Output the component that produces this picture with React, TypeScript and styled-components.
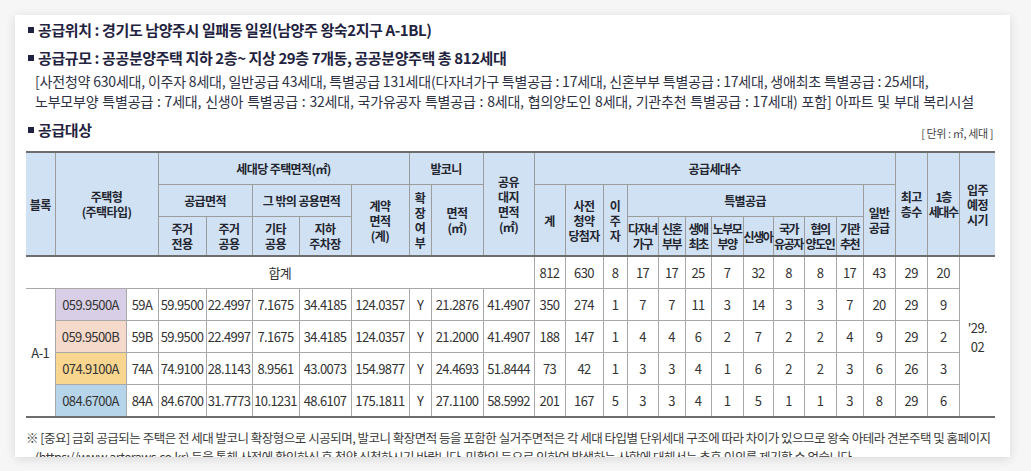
import styled, { createGlobalStyle } from "styled-components";

const GlobalStyle = createGlobalStyle`
  html, body {
    margin: 0;
    padding: 0;
    background: #f6f6f6;
  }
  body {
    font-family: "Noto Sans CJK KR", "Noto Sans", sans-serif;
    color: #2a2d3e;
  }
`;

const Page = styled.div`
  padding: 15px 21px 0 15px;
  height: 471px;
  box-sizing: border-box;
`;

const Card = styled.div`
  background: #fff;
  height: 442px;
  overflow: hidden;
  box-shadow: 0 2px 10px rgba(0, 0, 0, 0.12);
  padding: 4px 15px 0 11px;
  box-sizing: border-box;
`;

const Title = styled.div<{ $gap?: number }>`
  display: flex;
  align-items: center;
  gap: 4px;
  font-size: 15px;
  font-weight: 700;
  letter-spacing: -0.4px;
  line-height: 22px;
  color: #1f2340;
  padding-left: 2px;
  margin-top: ${(p) => p.$gap ?? 0}px;
`;

const Bullet = styled.span`
  display: inline-block;
  width: 6px;
  height: 6px;
  background: #1f2340;
`;

const Detail = styled.p`
  margin: 2px 0 4px 9px;
  font-size: 14px;
  line-height: 20px;
  letter-spacing: -0.2px;
  color: #2f3245;
  white-space: nowrap;
`;

const DetailLine = styled.span<{ $spread?: number }>`
  display: block;
  word-spacing: ${(p) => p.$spread ?? 0}px;
`;

const HeadingRow = styled.div`
  display: flex;
  justify-content: space-between;
  align-items: flex-end;
  margin-top: 8px;
`;

const Unit = styled.span`
  font-size: 11px;
  letter-spacing: -0.4px;
  color: #444;
  line-height: 14px;
  padding-right: 2px;
  margin-bottom: 1px;
`;

const Table = styled.table`
  width: 969px;
  margin-top: 10px;
  border-collapse: collapse;
  table-layout: fixed;
  border-top: 2px solid #6d6d6d;
  border-bottom: 2px solid #6d6d6d;
`;

const Col = styled.col<{ $w: number }>`
  width: ${(p) => p.$w}px;
`;

const Th = styled.th<{ $h?: number; $tight?: boolean }>`
  background: #cfe1f3;
  border: 1px solid #9c9c9c;
  border-top: none;
  font-size: 12px;
  font-weight: 700;
  line-height: 15px;
  letter-spacing: ${(p) => (p.$tight ? "-1.4px" : "-0.6px")};
  color: #23252f;
  padding: 0;
  height: ${(p) => p.$h ?? 31}px;
  text-align: center;
  vertical-align: middle;
  white-space: nowrap;

  &:first-child {
    border-left: none;
  }
  &:last-child {
    border-right: none;
  }
`;

const HeadRow = styled.tr`
  border-bottom: 2px solid #6d6d6d;
`;

const Td = styled.td<{ $bg?: string }>`
  background: ${(p) => p.$bg ?? "transparent"};
  border: 1px solid #a8a8a8;
  font-size: 13px;
  letter-spacing: -0.6px;
  color: #333;
  height: 31px;
  padding: 0;
  text-align: center;
  vertical-align: middle;
  white-space: nowrap;
  overflow: hidden;

  &:first-child {
    border-left: none;
  }
  &:last-child {
    border-right: none;
  }
`;

const SumCell = styled(Td)`
  border-left: none;
  border-right: none;
`;

const Note = styled.p`
  margin: 10px 0 0 0;
  font-size: 12.5px;
  line-height: 19px;
  letter-spacing: -0.5px;
  color: #3a3a3a;
`;

const NoteIndent = styled.span`
  display: block;
  padding-left: 9px;
`;

const colWidths = [
  29, 71, 32, 48, 46, 47, 52, 58, 22, 52, 51, 31, 38, 24, 31, 27, 26, 32, 30,
  31, 32, 27, 32, 32, 32, 36,
];

type Row = {
  code: string;
  type: string;
  color: string;
  values: string[];
};

const rows: Row[] = [
  {
    code: "059.9500A",
    type: "59A",
    color: "#d8cee6",
    values: ["59.9500", "22.4997", "7.1675", "34.4185", "124.0357", "Y", "21.2876", "41.4907", "350", "274", "1", "7", "7", "11", "3", "14", "3", "3", "7", "20", "29", "9"],
  },
  {
    code: "059.9500B",
    type: "59B",
    color: "#f5d9ca",
    values: ["59.9500", "22.4997", "7.1675", "34.4185", "124.0357", "Y", "21.2000", "41.4907", "188", "147", "1", "4", "4", "6", "2", "7", "2", "2", "4", "9", "29", "2"],
  },
  {
    code: "074.9100A",
    type: "74A",
    color: "#f8d68f",
    values: ["74.9100", "28.1143", "8.9561", "43.0073", "154.9877", "Y", "24.4693", "51.8444", "73", "42", "1", "3", "3", "4", "1", "6", "2", "2", "3", "6", "26", "3"],
  },
  {
    code: "084.6700A",
    type: "84A",
    color: "#b7d5ea",
    values: ["84.6700", "31.7773", "10.1231", "48.6107", "175.1811", "Y", "27.1100", "58.5992", "201", "167", "5", "3", "3", "4", "1", "5", "1", "1", "3", "8", "29", "6"],
  },
];

const totals = ["812", "630", "8", "17", "17", "25", "7", "32", "8", "8", "17", "43", "29", "20"];

// third header row: two-line labels under 공급면적 / 그 밖의 공용면적 / 특별공급
const subHeads: [string, string][] = [
  ["주거", "전용"],
  ["주거", "공용"],
  ["기타", "공용"],
  ["지하", "주차장"],
  ["다자녀", "가구"],
  ["신혼", "부부"],
  ["생애", "최초"],
  ["노부모", "부양"],
  ["신생아", ""],
  ["국가", "유공자"],
  ["협의", "양도인"],
  ["기관", "추천"],
];

const Lines = ({ parts }: { parts: string[] }) => (
  <>
    {parts.map((p, i) => (
      <span key={i}>
        {i > 0 && <br />}
        {p}
      </span>
    ))}
  </>
);

const App = () => {
  return (
    <>
      <GlobalStyle />
      <Page>
        <Card>
          <Title>
            <Bullet />
            공급위치 : 경기도 남양주시 일패동 일원(남양주 왕숙2지구 A-1BL)
          </Title>
          <Title $gap={6}>
            <Bullet />
            공급규모 : 공공분양주택 지하 2층~ 지상 29층 7개동, 공공분양주택 총 812세대
          </Title>
          <Detail>
            <DetailLine>
              [사전청약 630세대, 이주자 8세대, 일반공급 43세대, 특별공급 131세대(다자녀가구 특별공급 : 17세대, 신혼부부 특별공급 : 17세대, 생애최초 특별공급 : 25세대,
            </DetailLine>
            <DetailLine $spread={1}>
              노부모부양 특별공급 : 7세대, 신생아 특별공급 : 32세대, 국가유공자 특별공급 : 8세대, 협의양도인 8세대, 기관추천 특별공급 : 17세대) 포함] 아파트 및 부대 복리시설
            </DetailLine>
          </Detail>
          <HeadingRow>
            <Title>
              <Bullet />
              공급대상
            </Title>
            <Unit>[ 단위 : ㎡, 세대 ]</Unit>
          </HeadingRow>
          <Table>
            <colgroup>
              {colWidths.map((w, i) => (
                <Col key={i} $w={w} />
              ))}
            </colgroup>
            <thead>
              <tr>
                <Th rowSpan={3}>블록</Th>
                <Th rowSpan={3} colSpan={2}>
                  <Lines parts={["주택형", "(주택타입)"]} />
                </Th>
                <Th colSpan={5}>세대당 주택면적(㎡)</Th>
                <Th colSpan={2}>발코니</Th>
                <Th rowSpan={3}>
                  <Lines parts={["공유", "대지", "면적", "(㎡)"]} />
                </Th>
                <Th colSpan={12}>공급세대수</Th>
                <Th rowSpan={3}>
                  <Lines parts={["최고", "층수"]} />
                </Th>
                <Th rowSpan={3} $tight>
                  <Lines parts={["1층", "세대수"]} />
                </Th>
                <Th rowSpan={3}>
                  <Lines parts={["입주", "예정", "시기"]} />
                </Th>
              </tr>
              <tr>
                <Th colSpan={2}>공급면적</Th>
                <Th colSpan={2}>그 밖의 공용면적</Th>
                <Th rowSpan={2}>
                  <Lines parts={["계약", "면적", "(계)"]} />
                </Th>
                <Th rowSpan={2}>
                  <Lines parts={["확", "장", "여", "부"]} />
                </Th>
                <Th rowSpan={2}>
                  <Lines parts={["면적", "(㎡)"]} />
                </Th>
                <Th rowSpan={2}>계</Th>
                <Th rowSpan={2}>
                  <Lines parts={["사전", "청약", "당첨자"]} />
                </Th>
                <Th rowSpan={2}>
                  <Lines parts={["이", "주", "자"]} />
                </Th>
                <Th colSpan={8}>특별공급</Th>
                <Th rowSpan={2}>
                  <Lines parts={["일반", "공급"]} />
                </Th>
              </tr>
              <HeadRow>
                {subHeads.map(([a, b], i) => (
                  <Th key={i} $h={38} $tight={i >= 4}>
                    <Lines parts={b ? [a, b] : [a]} />
                  </Th>
                ))}
              </HeadRow>
            </thead>
            <tbody>
              <tr>
                <SumCell colSpan={11}>합계</SumCell>
                {totals.map((v, i) => (
                  <Td key={i}>{v}</Td>
                ))}
                <Td rowSpan={5}>
                  '29.
                  <br />
                  02
                </Td>
              </tr>
              {rows.map((r, i) => (
                <tr key={r.code}>
                  {i === 0 && <Td rowSpan={4}>A-1</Td>}
                  <Td $bg={r.color}>{r.code}</Td>
                  <Td>{r.type}</Td>
                  {r.values.map((v, j) => (
                    <Td key={j}>{v}</Td>
                  ))}
                </tr>
              ))}
            </tbody>
          </Table>
          <Note>
            ※ [중요] 금회 공급되는 주택은 전 세대 발코니 확장형으로 시공되며, 발코니 확장면적 등을 포함한 실거주면적은 각 세대 타입별 단위세대 구조에 따라 차이가 있으므로 왕숙 아테라 견본주택 및 홈페이지
            <NoteIndent>
              (https://www.arteraws.co.kr) 등을 통해 사전에 확인하신 후 청약 신청하시기 바랍니다. 미확인 등으로 인하여 발생하는 사항에 대해서는 추후 이의를 제기할 수 없습니다.
            </NoteIndent>
          </Note>
        </Card>
      </Page>
    </>
  );
};

export default App;
